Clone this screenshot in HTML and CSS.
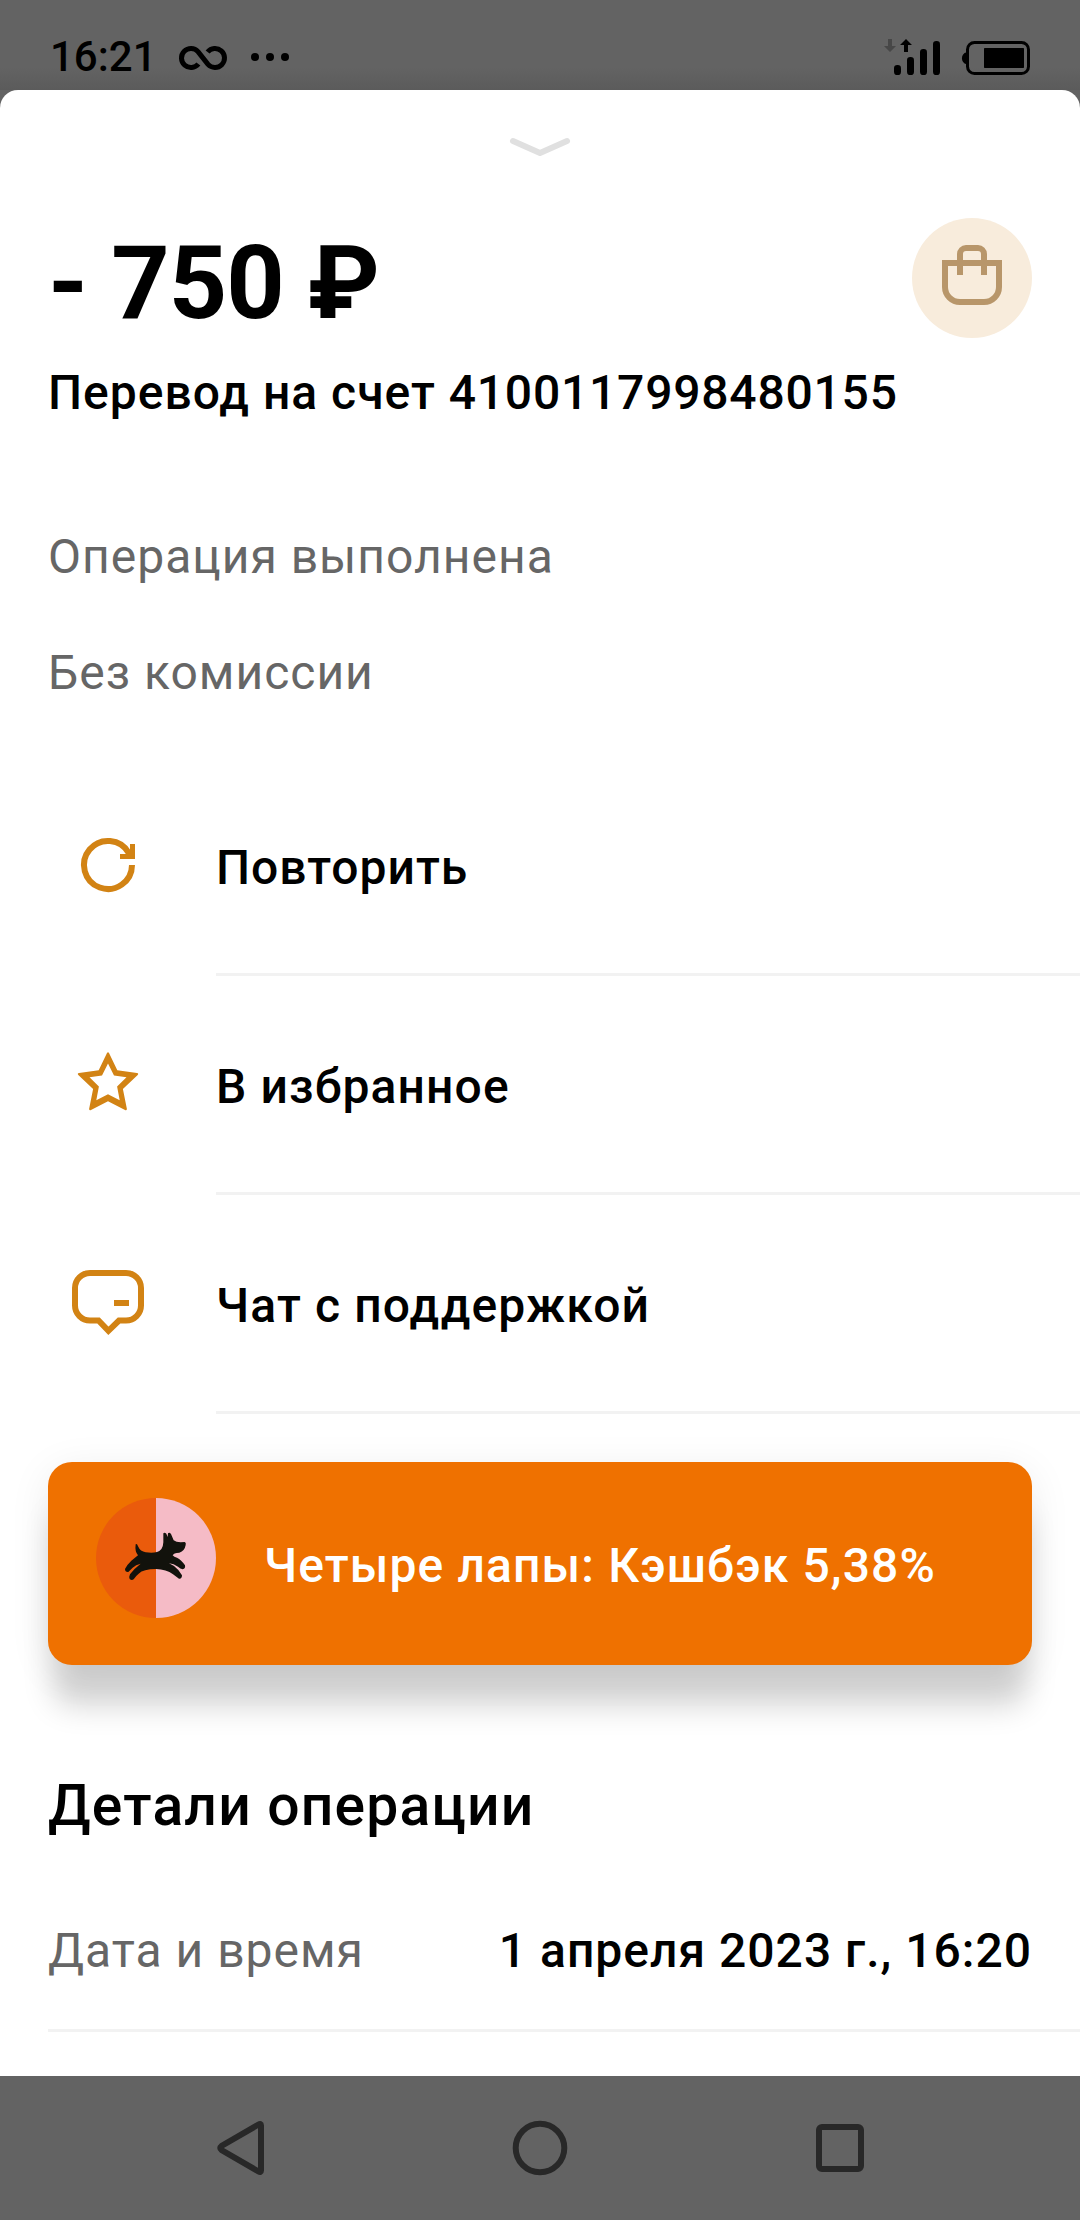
FILE: index.html
```html
<!DOCTYPE html>
<html lang="ru">
<head>
<meta charset="utf-8">
<title>Детали операции</title>
<link rel="stylesheet" href="styles.css">
</head>
<body>
<div class="screen">
  <header class="status">
    <span class="clock">16:21</span>
    <svg class="loop" viewBox="0 0 48 24"><path d="M19.4 18A9.5 9.5 0 1 1 19 5.6L29 18.4A9.5 9.5 0 1 0 28.6 6"/></svg>
    <svg class="dots" viewBox="0 0 38 8"><circle cx="4" cy="4" r="4"/><circle cx="19" cy="4" r="4"/><circle cx="34" cy="4" r="4"/></svg>
    <svg class="signal" viewBox="312 111 438 114">
      <path class="faint" d="M324 114h12v21h12l-18 18-18-18h12z"/>
      <path d="M378 114l18 18h-12v21h-12v-21h-12z"/>
      <rect x="342" y="192" width="21" height="30" rx="10"/>
      <rect x="381" y="168" width="21" height="54" rx="10"/>
      <rect x="420" y="144" width="21" height="78" rx="10"/>
      <rect x="459" y="120" width="21" height="102" rx="10"/>
      <path d="M560 154c-19 4-19 32 0 36z"/>
      <rect class="shell" x="562.5" y="124.500" width="183" height="93" rx="21"/>
      <rect x="612" y="141" width="120" height="60" rx="2"/>
    </svg>
  </header>

  <main class="sheet">
    <svg class="grip" viewBox="0 0 60 20"><path d="M3 4L30 16L57 4"/></svg>

    <section class="summary">
      <div class="sum-row">
        <h1 class="amount">- 750 ₽</h1>
        <svg class="category" viewBox="0 0 120 120">
          <circle cx="60" cy="60" r="60"/>
          <path d="M33 45H87V69A15 15 0 0 1 72 84H48A15 15 0 0 1 33 69Z"/>
          <path d="M48 57V36A6 6 0 0 1 54 30H66A6 6 0 0 1 72 36V57"/>
        </svg>
      </div>
      <p class="purpose">Перевод на счет <span class="account">4100117998480155</span></p>
      <p class="note">Операция выполнена</p>
      <p class="note">Без комиссии</p>
    </section>

    <nav class="actions">
      <a class="action">
        <svg class="icon" viewBox="0 0 72 72"><path class="line" d="M60 36A24 24 0 1 1 56.800 24L59 28"/><path d="M58 15h5v15H48v-5h10z"/></svg>
        <span class="label">Повторить</span>
      </a>
      <a class="action">
        <svg class="icon" viewBox="0 0 72 72"><path fill-rule="evenodd" d="M35 5Q36 3.600 37 5L45.300 22.300L65 25Q67 25.500 65.700 27L50.900 41L54.900 61Q54.600 63 53 62L36 53.300L19 62Q17.400 63 17.100 61L21.100 41L6.300 27Q5 25.500 7 25L26.700 22.300ZM36 15.500L30 27.600L17.500 29.300L26.900 38.600L24.300 52.300L36 46.300L47.700 52.300L45.100 38.600L54.500 29.300L42 27.600Z"/></svg>
        <span class="label label-wide">В избранное</span>
      </a>
      <a class="action">
        <svg class="icon" viewBox="0 0 72 72"><path class="line" d="M18 6H54A15 15 0 0 1 69 21V38.500A15 15 0 0 1 54 53.500H47L36.400 63.800L26.500 53.500H18A15 15 0 0 1 3 38.500V21A15 15 0 0 1 18 6Z"/><path d="M42 33h15v6H42z"/></svg>
        <span class="label label-wide">Чат с поддержкой</span>
      </a>
    </nav>

    <aside class="offer">
      <svg class="brand" viewBox="228 174 360 360">
        <path class="half-left" d="M408 174A180 180 0 0 0 408 534Z"/>
        <path class="half-right" d="M408 174A180 180 0 0 1 408 534Z"/>
        <path class="dog" d="M347 313Q351 310 354 319Q361 335 377 337Q398 340 411 336Q429 331 430 307V280Q434 276 439 281L443 291L444 280Q448 276 453 282L461 301Q468 307 482 307L494 306Q499 307 497 315Q494 333 478 338Q460 339 458 346Q462 351 471 353Q484 359 495 376Q497 386 488 388Q481 386 474 380Q461 371 447 370Q464 377 475 390L486 406Q486 417 477 416Q468 410 459 403Q439 388 408 387Q370 387 356 401Q347 408 341 418Q335 422 329 417Q326 411 330 403Q342 386 362 371Q347 374 338 383L325 396Q315 397 315 387Q322 373 334 362L354 346Q344 335 347 313Z"/>
      </svg>
      <span class="offer-text">Четыре лапы: Кэшбэк 5,38%</span>
    </aside>

    <section class="details">
      <h2 class="heading">Детали операции</h2>
      <div class="detail">
        <span class="key">Дата и время</span>
        <span class="value">1 апреля 2023 г., 16:20</span>
      </div>
    </section>
  </main>

  <footer class="navbar">
    <svg class="key-icon" viewBox="0 0 60 60"><path d="M51 7.500V52.500Q51 55 48.500 53.500L11.500 32Q9 30 11.500 28L48.500 6.500Q51 5 51 7.500Z"/></svg>
    <svg class="key-icon" viewBox="0 0 60 60"><circle cx="30" cy="30" r="24.300"/></svg>
    <svg class="key-icon" viewBox="0 0 60 60"><rect x="9" y="9" width="42" height="42" rx="3"/></svg>
  </footer>
</div>
</body>
</html>
```
FILE: styles.css
```css
* { box-sizing: border-box; }

body {
  margin: 0;
  background: #636363;
  font-family: Roboto, "Noto Sans", sans-serif;
  color: #000;
}

h1, h2, p { margin: 0; }
svg { display: block; flex: none; overflow: visible; }

.screen {
  width: 1080px;
  height: 2220px;
  display: flex;
  flex-direction: column;
  overflow: hidden;
}

/* Status bar */
.status {
  height: 90px;
  padding: 24px 50px 0 50px;
  display: flex;
  align-items: center;
  background: linear-gradient(#636363 75%, #5b5b5b);
}
.clock { width: 129px; font-size: 42px; line-height: 60px; font-weight: 500; }
.loop { width: 48px; height: 24px; margin-top: 2px; fill: none; stroke: #000; stroke-width: 5; }
.dots { width: 38px; height: 8px; margin-left: 24px; }
.signal { width: 146px; height: 38px; margin-left: auto; }
.signal .faint { fill: #474747; }
.signal .shell { fill: none; stroke: #000; stroke-width: 9; }

/* Bottom sheet */
.sheet {
  height: 1986px;
  display: flex;
  flex-direction: column;
  background: #fff;
  border-radius: 18px 18px 0 0;
}
.grip {
  width: 60px;
  height: 20px;
  margin: 47px auto 0;
  fill: none;
  stroke: #e0e0e0;
  stroke-width: 6;
  stroke-linecap: round;
  stroke-linejoin: round;
}

.summary { padding: 61px 48px 0; height: 600px; }
.sum-row { display: flex; justify-content: space-between; height: 145px; }
.amount { font-size: 102px; line-height: 130px; font-weight: 700; letter-spacing: -1.1px; }
.category circle { fill: #f8ecdc; }
.category path { fill: none; stroke: #b8966a; stroke-width: 6; }
.category { width: 120px; height: 120px; }

.purpose, .note, .label, .offer-text, .key, .value {
  font-size: 48px;
  line-height: 60px;
  letter-spacing: 1px;
  white-space: nowrap;
}
.purpose, .label, .offer-text, .value { font-weight: 500; }
.purpose { margin-bottom: 104px; }
.account { letter-spacing: 0.78px; }
.note { color: #666; margin-bottom: 56px; }

/* Action list */
.action { display: flex; align-items: center; height: 219px; padding-left: 72px; }
.icon { width: 72px; height: 72px; margin: 0 72px 3px 0; fill: #d28314; }
.icon .line { fill: none; stroke: #d28314; stroke-width: 6; }
.label {
  flex: 1;
  height: 219px;
  padding-top: 81px;
  border-bottom: 3px solid #f2f2f2;
}
.label-wide { letter-spacing: 1.13px; }

/* Cashback banner */
.offer {
  flex: none;
  margin: 48px 48px 0;
  height: 203px;
  padding: 36px 48px 0;
  display: flex;
  gap: 48px;
  border-radius: 24px;
  background: #ef7100;
  color: #fff;
  box-shadow: 0 46px 30px -5px rgba(0, 0, 0, 0.17), 0 8px 42px rgba(0, 0, 0, 0.08);
}
.brand { width: 120px; height: 120px; }
.half-left { fill: #ea5b0c; }
.half-right { fill: #f5bbc6; }
.dog { fill: #12120c; }
.offer-text { padding-top: 38px; letter-spacing: 1.12px; }

/* Details */
.details { padding: 106px 0 0 48px; }
.heading { font-size: 57px; line-height: 70px; font-weight: 500; letter-spacing: 1.2px; }
.detail {
  display: flex;
  justify-content: space-between;
  height: 191px;
  padding: 80px 48px 0 0;
  border-bottom: 3px solid #f2f2f2;
}
.key { color: #666; }

/* System navigation */
.navbar {
  height: 144px;
  display: flex;
  justify-content: center;
  align-items: center;
  gap: 240px;
  background: #636363;
}
.key-icon { width: 60px; height: 60px; fill: none; stroke: #282828; stroke-width: 6; }
```
